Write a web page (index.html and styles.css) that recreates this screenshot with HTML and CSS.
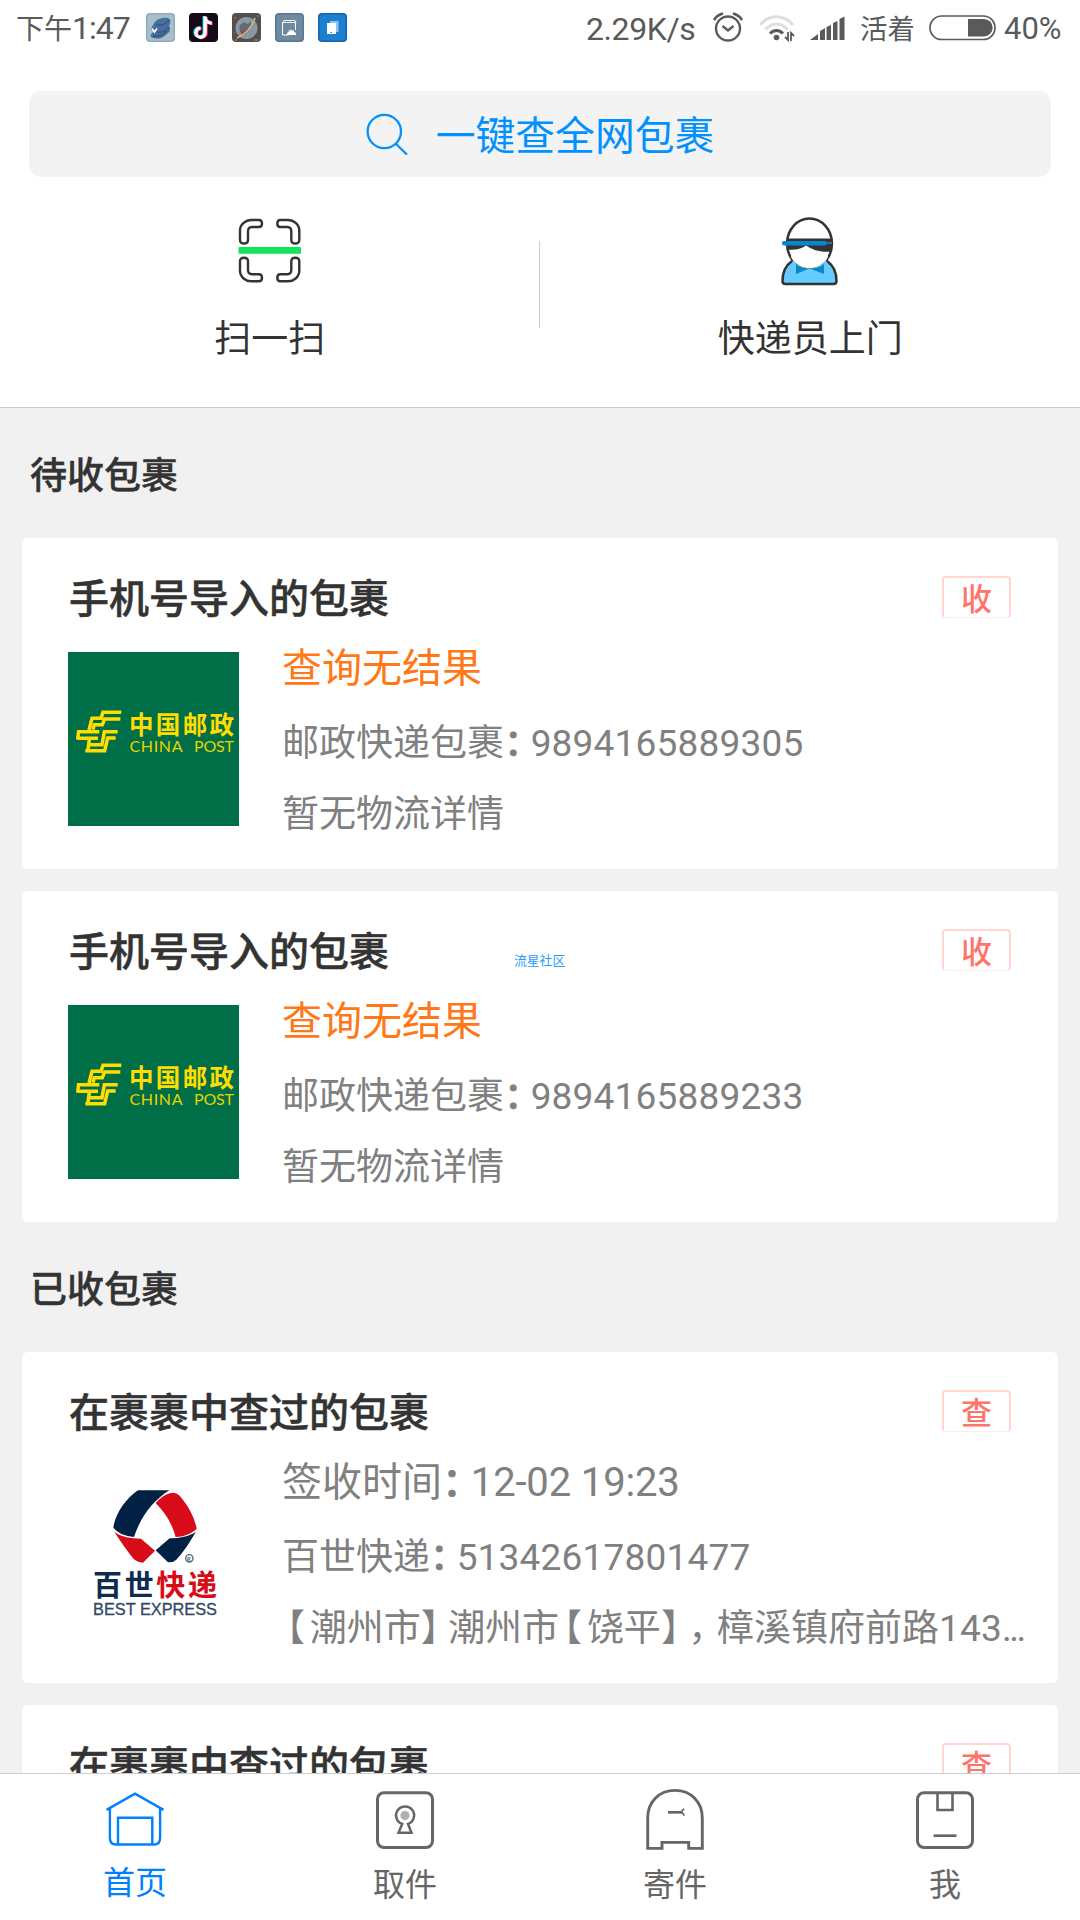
FILE: index.html
```html
<!DOCTYPE html>
<html lang="zh-CN">
<head>
<meta charset="utf-8">
<title>包裹</title>
<link rel="stylesheet" href="styles.css">
</head>
<body>
<div class="screen">
  <header class="top">
    <div class="status">
      <div class="status-left">
        <span class="status-text">下午<span class="clock">1:47</span></span>
        <div class="apps">
          <svg class="app" viewBox="0 0 29 29"><rect width="29" height="29" rx="4" fill="#8fabc0"/><rect x="1.500" y="1.500" width="26" height="26" rx="3" fill="#a9bfcc"/><path d="M6 14C9 6 16 4 22 5c3 1 3 5 1 8 2 3 1 6-2 8-4 4-9 6-14 4-3-1-3-3-1-5l3-2-4-1z" fill="#45709f"/><path d="M10 12c5 1 10-1 13-5M11 19c5 1 9-1 12-5M7 23c6 1 10-1 14-5" stroke="#33496b" fill="none"/><path d="M6 15.500l2.500 3.500 2.500-3.500" stroke="#fff" stroke-width="1.600" fill="none"/></svg>
          <svg class="app" viewBox="0 0 29 29"><rect width="29" height="29" rx="4" fill="#160a18"/><g fill="none" stroke-width="3.300"><path d="M15.200 3v16.200a4.600 4.600 0 1 1-4.600-4.600M15.200 5c1 3 3 4.500 6.500 4.500" stroke="#27e5e5"/><path d="M17.200 4v16.200a4.600 4.600 0 1 1-4.600-4.600M17.200 6c1 3 3 4.500 6.500 4.500" stroke="#f52a55"/><path d="M16.200 3.500v16.200a4.600 4.600 0 1 1-4.600-4.600M16.200 5.500c1 3 3 4.500 6.500 4.500" stroke="#fff"/></g></svg>
          <svg class="app" viewBox="0 0 29 29"><rect width="29" height="29" rx="4" fill="#554e4d"/><circle cx="14.500" cy="15" r="11" fill="#8898a5"/><path d="M8 12l4-3 3 2 4-2 1 5-4 1 1 4-5 1-5-3z" fill="#656b76"/><path d="M8 18l5-1 1 4-4 2z" fill="#844d52"/><path d="M5 25C14 21 20 14 23 5" stroke="#d9b778" stroke-width="1.500" fill="none"/><path d="M2 5h2M25 3h2M3 27h2M22 27h4M2 20h1" stroke="#b08d50"/></svg>
          <svg class="app" viewBox="0 0 29 29"><rect width="29" height="29" rx="4" fill="#5c7690"/><rect x="1.500" y="1.500" width="26" height="26" rx="3" fill="#6e89a2"/><path d="M7.500 9.500V22h6M7.500 9.500h13V17M7.500 9.500l1.500-2h11l1 2" stroke="#fff" fill="none"/><path d="M12 22c0-3 1-3 2-3l-1-2 2 1 1-2 1 2 2-1v2c2 0 2 2 2 3z" fill="#fff"/></svg>
          <svg class="app" viewBox="0 0 29 29"><rect width="29" height="29" rx="4" fill="#1566ae"/><rect x="1.500" y="1.500" width="26" height="26" rx="3" fill="#1c80cf"/><path d="M12 8h8.500v11H12z" fill="#8ec5ef"/><path d="M9 10h9v11H9z" fill="#fff"/><path d="M12.500 19.500h1.500" stroke="#1c80cf"/></svg>
        </div>
      </div>
      <div class="status-right">
        <span class="speed">2.29K/s</span>
        <svg class="alarm" viewBox="0 0 30 30"><g fill="none" stroke="#5a5a5a" stroke-width="2.400"><circle cx="15" cy="16.500" r="12"/><path d="M9.500 14l5.500 4.500L20.500 14"/><path d="M1 8C3 4.500 6 2.500 10 1.500M29 8C27 4.500 24 2.500 20 1.500" stroke-width="2.800"/></g></svg>
        <svg class="wifi" viewBox="0 0 36 28"><g fill="none" stroke-width="3"><path d="M1 11C10 0 25 0 34 11M6.500 15.500C13 8 22 8 28.500 15.500" stroke="#dedede"/><path d="M11 19.500c4-4 9-4 13 0" stroke="#5a5a5a"/></g><circle cx="17.500" cy="23.500" r="2.800" fill="#5a5a5a"/><path d="M29 18v8l-3-3M32 27v-8l3 3" fill="none" stroke="#5a5a5a" stroke-width="1.800"/></svg>
        <svg class="signal" viewBox="0 0 35 25"><path d="M0 24l8-6v6zM10 15l5-3v12h-5zM16.500 11l4.500-2v15h-4.500zM23 7l4.500-2v19H23zM29.500 3l5-2.500V24h-5z" fill="#5a5a5a"/></svg>
        <span class="carrier">活着</span>
        <svg class="battery" viewBox="0 0 67 26"><rect x="1" y="1" width="65" height="23.500" rx="11.700" fill="none" stroke="#5a5a5a" stroke-width="1.700"/><path d="M39 4h16a8.700 8.700 0 0 1 0 17.400H39z" fill="#5a5a5a"/></svg>
        <span class="percent">40%</span>
      </div>
    </div>
    <div class="search">
      <svg class="search-icon" viewBox="0 0 42 42"><g fill="none" stroke="#0091ff" stroke-width="2.300"><circle cx="18.300" cy="18.500" r="16.700"/><path d="M29.500 30.500L41 41.500"/></g></svg>
      <span>一键查全网包裹</span>
    </div>
    <div class="actions">
      <div class="action">
        <svg class="action-icon" viewBox="0 0 70 70"><g fill="none" stroke="#333" stroke-width="2.400"><path id="corner" d="M5 13.500C5 7 11 3 16 3h8q3 0 3 3.500T24 10h-7c-3 0-4 2-4 4.500V23q0 3.500-4 3.500T5 23z"/><use href="#corner" transform="matrix(-1 0 0 1 69.300 0)"/><use href="#corner" transform="matrix(1 0 0 -1 0 67.300)"/><use href="#corner" transform="matrix(-1 0 0 -1 69.300 67.300)"/></g><rect x="3.500" y="30" width="62.500" height="6.800" rx="1" fill="#12e35b"/></svg>
        <span>扫一扫</span>
      </div>
      <div class="divider"></div>
      <div class="action">
        <svg class="action-icon" viewBox="0 0 70 70"><path d="M17 44C10 49 7.500 57 7.500 64q0 3 3 3h48q3 0 3-3C61.500 57 59 49 52 44z" fill="#66ccff" stroke="#333" stroke-width="2.500"/><ellipse cx="34.500" cy="26.500" rx="22.500" ry="25" fill="#fff" stroke="#333" stroke-width="2.500"/><path d="M18 43.500C27 54 42 54 51 43.500l3 6-3 6H17l-2-6z" fill="#66ccff"/><path d="M16 40C24 55 45 55 53 40l-4-12H20z" fill="#fff"/><path d="M21 47v10l13.500-5.500L49 57V47C42 53 28 53 21 47z" fill="#0d87c7"/><path d="M12 21.500h45v13c-12 1-18-1-26-6-4 3-10 5-19 4z" fill="#333"/><rect x="7" y="24" width="45" height="4.500" rx="2" fill="#0786cc"/><path d="M51 26h6" stroke="#376f94" stroke-width="2"/></svg>
        <span>快递员上门</span>
      </div>
    </div>
  </header>

  <main class="list">
    <h2 class="section">待收包裹</h2>
    <article class="card">
      <div class="card-head"><h3>手机号导入的包裹</h3><span class="badge">收</span></div>
      <div class="card-body">
        <svg class="logo" viewBox="0 0 171 174"><rect width="171" height="174" fill="#006e46"/><g id="post"><g transform="scale(.3333) translate(-24 -36)" fill="none" stroke="#fd0" stroke-width="10.500"><path d="M184 217h-55l-6 18H96l-9 35M181 237h-47l-7 17h-24l-4 15M52 275h66M52 295h62M56 271l-3 28M173 275h-40l-7 39H84M167 294h-24l-9 38H76M88 298l-4 30"/></g><text class="post-cn" x="61" y="82" textLength="105">中国邮政</text><text class="post-en" x="61.500" y="100.300" textLength="53">CHINA</text><text class="post-en" x="126" y="100.300" textLength="40">POST</text></g></svg>
        <div class="info">
          <p class="state alert">查询无结果</p>
          <p class="line">邮政快递包裹<span class="colon">：</span><span class="number">9894165889305</span></p>
          <p class="line">暂无物流详情</p>
        </div>
      </div>
    </article>
    <article class="card">
      <div class="card-head"><h3>手机号导入的包裹</h3><span class="badge">收</span></div>
      <div class="card-body">
        <svg class="logo" viewBox="0 0 171 174"><rect width="171" height="174" fill="#006e46"/><use href="#post"/></svg>
        <div class="info">
          <p class="state alert">查询无结果</p>
          <p class="line">邮政快递包裹<span class="colon">：</span><span class="number">9894165889233</span></p>
          <p class="line">暂无物流详情</p>
        </div>
      </div>
    </article>
    <h2 class="section">已收包裹</h2>
    <article class="card">
      <div class="card-head"><h3>在裹裹中查过的包裹</h3><span class="badge">查</span></div>
      <div class="card-body">
        <svg class="logo" viewBox="0 0 171 174"><g transform="scale(.3333) translate(-24 -48)"><path d="M234 121h94C279 151 240 204 222 261q-42-3-62-28c7-45 37-86 74-112z" fill="#002045"/><path d="M287 159c15-18 35-30 52-31q12 0 20 9c25 29 44 62 51 99-16 16-40 24-63 25-11-40-30-72-60-102z" fill="#d70c18"/><path d="M163 246c22 15 49 20 80 20l42 36-36 36q-18-2-28-11c-22-26-40-55-58-81z" fill="#d70c18"/><path d="M408 245c-18 31-37 60-59 84q-9 9-25 8l-37-36 42-36c29 0 58-6 79-20z" fill="#002045"/><circle cx="388" cy="325" r="11" fill="none" stroke="#52677d" stroke-width="4"/></g><text class="reg" x="119.100" y="95.200">R</text><text class="best-cn" x="25" y="130" textLength="124"><tspan fill="#102b50">百世</tspan><tspan fill="#d70c18">快递</tspan></text><text class="best-en" x="25" y="149.200" textLength="124" lengthAdjust="spacingAndGlyphs">BEST EXPRESS</text></svg>
        <div class="info">
          <p class="state">签收时间<span class="colon">：</span><span class="time">12-02 19:23</span></p>
          <p class="line">百世快递<span class="colon">：</span><span class="number">51342617801477</span></p>
          <p class="line"><span class="open">【</span>潮州市<span class="close">】</span>潮州市<span class="open">【</span>饶平<span class="close">】</span><span class="comma">，</span>樟溪镇府前路<span class="number">143</span><span class="dots">...</span></p>
        </div>
      </div>
    </article>
    <article class="card">
      <div class="card-head"><h3>在裹裹中查过的包裹</h3><span class="badge">查</span></div>
    </article>
  </main>

  <nav class="tabs">
    <div class="tab active">
      <svg class="tab-icon" viewBox="0 0 60 64"><g fill="none" stroke="#0080ff" stroke-width="2.400"><path d="M1.500 21.900L30 5.700l28.500 16.200M4.900 20.500V50q0 6.500 6 6.500h38.200q6 0 6-6.500V20.500M13 56V29.700h34.300V56"/></g></svg>
      <span>首页</span>
    </div>
    <div class="tab">
      <svg class="tab-icon" viewBox="0 0 60 64"><g fill="none" stroke="#666"><rect x="2.500" y="4.700" width="55" height="54.800" rx="6.500" stroke-width="3"/><path d="M27.200 35.900a9 9 0 1 1 5.800 0l3.500 8.900h-13z" stroke-width="2.500"/></g><circle cx="30" cy="27.600" r="4.600" fill="#b0b0b0"/></svg>
      <span>取件</span>
    </div>
    <div class="tab">
      <svg class="tab-icon" viewBox="0 0 60 64"><g fill="none" stroke="#666"><path d="M2.700 60.400V30C2.700 14 14 2.400 30 2.400S57.300 14 57.300 30v30.400H43.700v-6H17v6z" stroke-width="2.900"/><path d="M23 24.300h14" stroke-width="2.700"/><path d="M36.500 24.300q.500-2.500 2.700-3.600M36.500 24.300q2 1 2.700 3.500" stroke-width="1.600"/></g></svg>
      <span>寄件</span>
    </div>
    <div class="tab">
      <svg class="tab-icon" viewBox="0 0 60 64"><g fill="none" stroke="#666" stroke-width="3"><rect x="2.500" y="4.700" width="55" height="54.800" rx="6.500"/><path d="M22.500 5v17h15V5" stroke-width="2.600"/><path d="M18.600 47.700h22.900" stroke-width="2.700"/></g></svg>
      <span>我</span>
    </div>
  </nav>
  <div class="watermark">流星社区</div>
</div>
</body>
</html>
```
FILE: styles.css
```css
* { box-sizing: border-box; margin: 0; padding: 0; }
body { font-family: Roboto, "Noto Sans CJK SC", sans-serif; background: #f1f1f1; color: #333; }
svg { display: block; flex: none; }
.screen { position: relative; width: 1080px; height: 1920px; display: flex; flex-direction: column; overflow: hidden; }

.top { height: 408px; flex: none; background: #fff; border-bottom: 1px solid #ccc; }
.status { height: 91px; padding: 8px 17px 0 16px; display: flex; justify-content: space-between; color: #5a5a5a; font-size: 28px; line-height: 40px; white-space: nowrap; }
.status-left, .status-right { display: flex; height: 40px; }
.status-text { width: 130px; padding-top: 1.500px; }
.clock { font-size: 32px; letter-spacing: -1px; line-height: 1; }
.apps { display: flex; gap: 14px; padding-top: 5px; }
.app { width: 29px; height: 29px; }
.speed { width: 127px; padding-top: 1px; font-size: 32px; letter-spacing: -.400px; }
.alarm { width: 30px; height: 30px; margin: 4px 16px 0 0; }
.wifi { width: 36px; height: 28px; margin: 6px 15px 0 0; }
.signal { width: 35px; height: 25px; margin: 8px 15px 0 0; }
.carrier { width: 69px; padding-top: 2px; font-size: 27.500px; }
.battery { width: 67px; height: 26px; margin: 7px 8px 0 0; }
.percent { width: 59px; padding-top: 1px; font-size: 31px; letter-spacing: 0; }

.search { height: 86px; margin: 0 29px; border-radius: 12px; background: #f3f3f3; color: #0091ff; display: flex; align-items: center; justify-content: center; gap: 28px; font-size: 39.800px; line-height: 50px; }
.search span { padding-top: 5px; }
.search-icon { width: 42px; height: 42px; }
.actions { display: flex; height: 230px; }
.action { flex: 1; display: flex; flex-direction: column; align-items: center; gap: 28px; padding-top: 40px; font-size: 37px; line-height: 50px; }
.action-icon { width: 70px; height: 70px; }
.divider { width: 1px; height: 87px; margin: 64px 1px 0 -1px; background: #ccc; }

.list { flex: 1; min-height: 0; overflow: hidden; padding: 0 22px; }
.section { height: 130px; padding: 43.500px 8px 0; font-size: 37px; line-height: 50px; font-weight: 500; -webkit-text-stroke: .4px currentColor; }
.card { height: 331px; background: #fff; border-radius: 6px; padding: 38px 30px 0 46px; }
.card + .card { margin-top: 22px; }
.card-head { display: flex; justify-content: space-between; height: 76px; padding: 0 17px 0 1px; }
.card-head h3 { padding-top: 1px; font-size: 40px; line-height: 46px; font-weight: 500; -webkit-text-stroke: .5px currentColor; }
.badge { width: 69px; height: 42px; border: 2px solid #ffd6d2; border-bottom: 1px solid #ffecea; border-radius: 4px; color: #ff7369; font-size: 31px; line-height: 43px; font-weight: 500; text-align: center; }
.card-body { display: flex; gap: 43px; }
.logo { width: 171px; height: 174px; }
.info { flex: 1; min-width: 0; color: #808080; white-space: nowrap; }
.state { font-size: 40px; line-height: 50px; margin-top: -8px; }
.alert { color: #ff7717; }
.line { font-size: 37px; line-height: 50px; margin-top: 25px; }
.line + .line { margin-top: 20.500px; }
.number { letter-spacing: .2px; }
.time { letter-spacing: -.15px; }

/* half-width CJK punctuation, padded to the app's narrow advance */
.colon, .open, .close, .comma { display: inline-block; vertical-align: top; font-feature-settings: "halt"; }
.colon { width: .72em; font-weight: 500; -webkit-text-stroke: .6px currentColor; }
.open { width: .75em; padding-left: .12em; }
.close { width: .74em; }
.comma { width: .78em; }
.dots { letter-spacing: -2.500px; }

.post-cn { font-size: 24.500px; font-weight: 700; fill: #fd0; }
.post-en { font-family: Lato, sans-serif; font-size: 16px; fill: #e5d400; }
.best-cn { font-size: 29px; font-weight: 700; }
.best-en { font-family: "Liberation Sans", sans-serif; font-size: 16px; fill: #304866; stroke: #304866; stroke-width: .3px; }
.reg { font-size: 5.500px; font-weight: 700; fill: #52677d; }

.tabs { height: 147px; flex: none; background: #fff; border-top: 1px solid #ccc; display: flex; color: #666; }
.tab { flex: 1; display: flex; flex-direction: column; align-items: center; gap: 12.500px; padding-top: 14px; font-size: 32px; line-height: 40px; }
.tab-icon { width: 60px; height: 64px; }
.active { color: #0080ff; gap: 10.500px; }
.watermark { position: absolute; left: 514px; top: 951px; font-size: 12.800px; line-height: 20px; color: #2a9df4; }
```
